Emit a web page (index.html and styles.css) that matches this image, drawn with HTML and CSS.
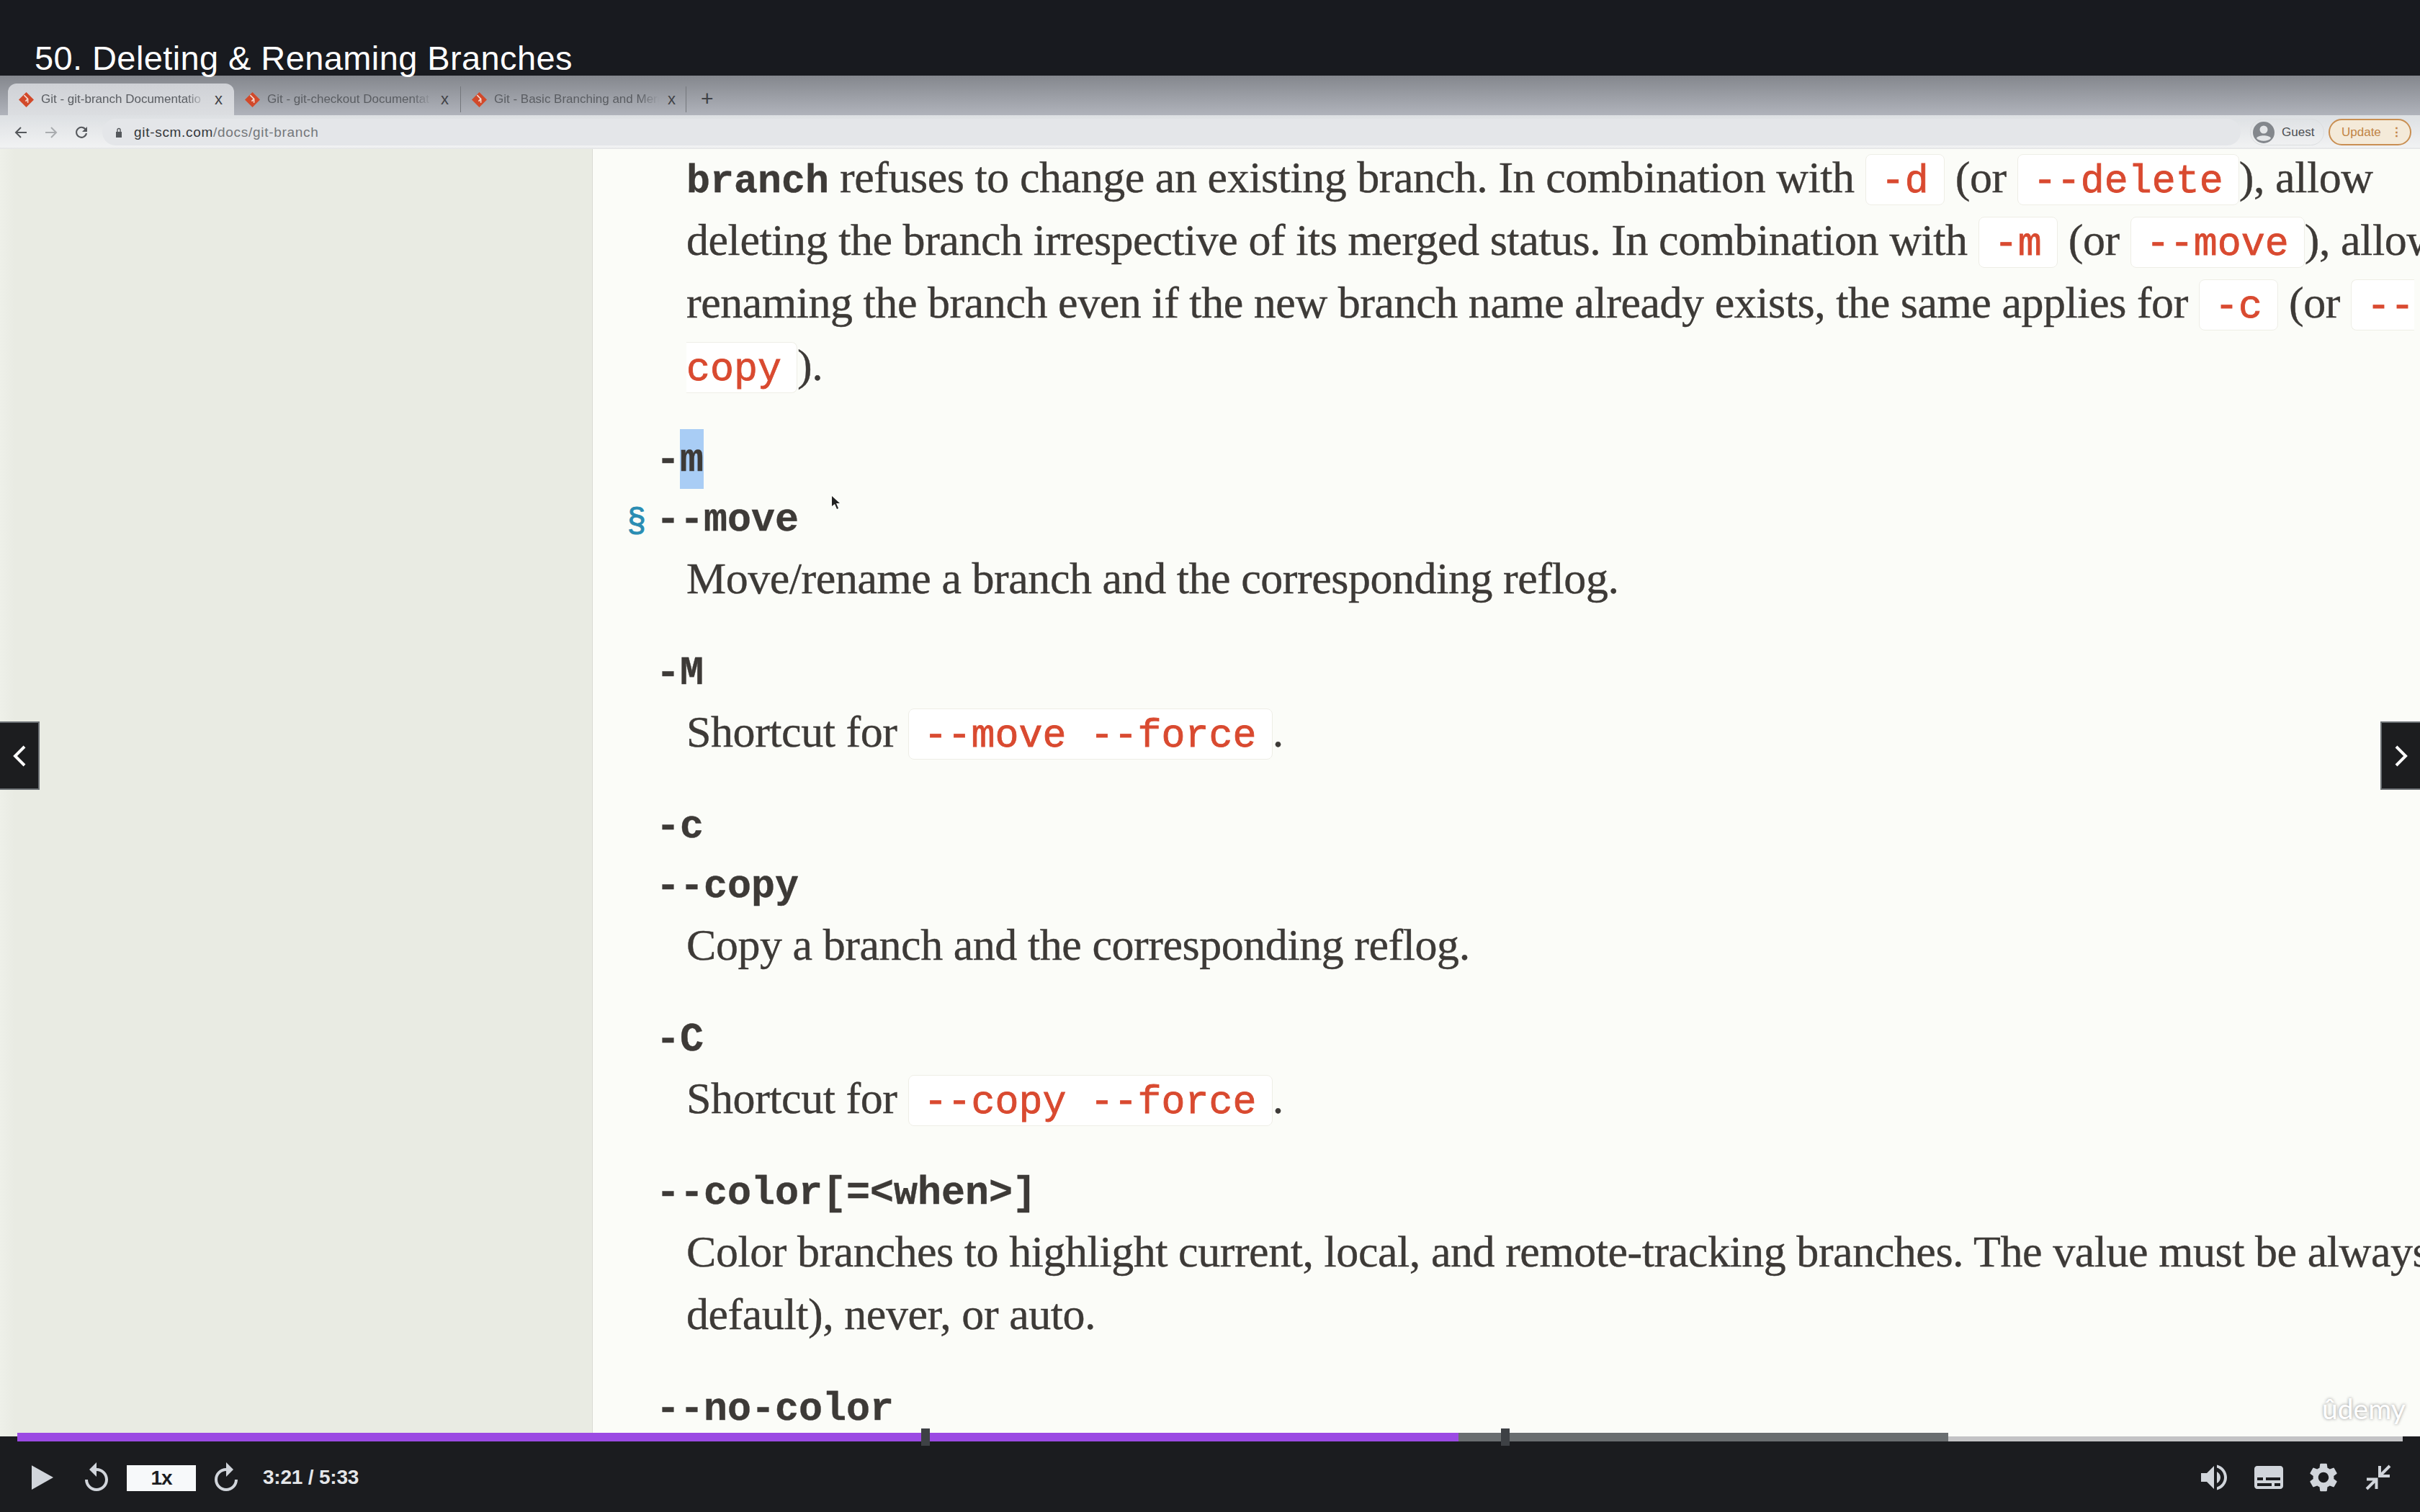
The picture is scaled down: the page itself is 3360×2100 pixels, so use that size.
FILE: index.html
```html
<!DOCTYPE html>
<html lang="en">
<head>
    <meta charset="UTF-8">
    <title>50. Deleting &amp; Renaming Branches</title>
    <link rel="stylesheet" href="styles.css">
</head>
<body>
    <header class="topbar">
        <h1 class="lecture-title">50. Deleting &amp; Renaming Branches</h1>
    </header>

    <main class="video">
        <div class="tabstrip">
            <div class="tab tab-active">
                <svg class="favicon" viewBox="0 0 20 20"><path fill="#d2492a" d="M10 0l10 10-10 10L0 10z"/><path fill="none" stroke="#f3d9d0" stroke-width="1.6" d="M7 4l5 5v5M12 9l-3 3"/></svg>
                <span class="tab-title">Git - git-branch Documentatio</span>
                <span class="tab-close">x</span>
            </div>
            <div class="tab">
                <svg class="favicon" viewBox="0 0 20 20"><path fill="#d2492a" d="M10 0l10 10-10 10L0 10z"/><path fill="none" stroke="#f3d9d0" stroke-width="1.6" d="M7 4l5 5v5M12 9l-3 3"/></svg>
                <span class="tab-title">Git - git-checkout Documentat</span>
                <span class="tab-close">x</span>
            </div>
            <div class="tab tab-divided">
                <svg class="favicon" viewBox="0 0 20 20"><path fill="#d2492a" d="M10 0l10 10-10 10L0 10z"/><path fill="none" stroke="#f3d9d0" stroke-width="1.6" d="M7 4l5 5v5M12 9l-3 3"/></svg>
                <span class="tab-title">Git - Basic Branching and Merg</span>
                <span class="tab-close">x</span>
            </div>
            <span class="tab-new">+</span>
        </div>

        <div class="toolbar">
            <svg class="nav-icon" viewBox="0 0 18 18"><path fill="none" stroke="#55585c" stroke-width="2" d="M17 9H2M9 2L2 9l7 7"/></svg>
            <svg class="nav-icon nav-off" viewBox="0 0 18 18"><path fill="none" stroke="#a9acaf" stroke-width="2" d="M1 9h15M9 2l7 7-7 7"/></svg>
            <svg class="nav-icon" viewBox="0 0 18 18"><path fill="none" stroke="#55585c" stroke-width="2" d="M15.5 6A7 7 0 1 0 16 10"/><path fill="#55585c" d="M17 1v7h-7z"/></svg>
            <div class="omnibox">
                <svg class="lock" viewBox="0 0 10 14"><path fill="#55585c" d="M1 6h8v8H1z"/><path fill="none" stroke="#55585c" stroke-width="1.4" d="M3 6V3.500a2 2 0 0 1 4 0V6"/></svg>
                <span class="url"><span class="url-host">git-scm.com</span>/docs/git-branch</span>
            </div>
            <div class="guest">
                <svg class="avatar" viewBox="0 0 30 30"><circle cx="15" cy="15" r="15" fill="#83878c"/><circle cx="15" cy="11" r="5.500" fill="#e4e6e8"/><path fill="#e4e6e8" d="M5 23c2-5 18-5 20 0-4 5-16 5-20 0z"/></svg>
                <span>Guest</span>
            </div>
            <div class="update">
                <span>Update</span>
                <span class="update-dots">⋮</span>
            </div>
        </div>

        <div class="page">
            <aside class="sidebar"></aside>
            <article class="doc">
                <p class="intro"><b class="cmd">branch</b> refuses to change an existing branch. In combination with <code>-d</code> (or <code>--delete</code>), allow<br>deleting the branch irrespective of its merged status. In combination with <code>-m</code> (or <code>--move</code>), allow<br>renaming the branch even if the new branch name already exists, the same applies for <code>-c</code> (or <code>--<br>copy</code>).</p>

                <dl class="options">
                    <div class="option">
                        <dt>-<span class="selected">m</span></dt>
                        <dt class="anchored"><span class="anchor">§</span>--move</dt>
                        <dd>Move/rename a branch and the corresponding reflog.</dd>
                    </div>
                    <div class="option">
                        <dt>-M</dt>
                        <dd>Shortcut for <code>--move --force</code>.</dd>
                    </div>
                    <div class="option">
                        <dt>-c</dt>
                        <dt>--copy</dt>
                        <dd>Copy a branch and the corresponding reflog.</dd>
                    </div>
                    <div class="option">
                        <dt>-C</dt>
                        <dd>Shortcut for <code>--copy --force</code>.</dd>
                    </div>
                    <div class="option">
                        <dt>--color[=&lt;when&gt;]</dt>
                        <dd>Color branches to highlight current, local, and remote-tracking branches. The value must be always (the<br>default), never, or auto.</dd>
                    </div>
                    <div class="option">
                        <dt>--no-color</dt>
                    </div>
                </dl>
            </article>
        </div>

        <svg class="cursor" viewBox="0 0 12 18"><path fill="#222" d="M0 0l11 10H6l3 7-2 1-3-7-4 3z"/></svg>
        <div class="watermark">ûdemy</div>

        <button class="side-arrow side-prev"><svg viewBox="0 0 20 32"><path fill="none" stroke="#fff" stroke-width="4" d="M17 3L4 16l13 13"/></svg></button>
        <button class="side-arrow side-next"><svg viewBox="0 0 20 32"><path fill="none" stroke="#fff" stroke-width="4" d="M3 3l13 13L3 29"/></svg></button>
    </main>

    <div class="progress">
        <div class="progress-played"></div>
        <div class="progress-buffered"></div>
        <div class="progress-rest"></div>
        <span class="bookmark bookmark-one"></span>
        <span class="bookmark bookmark-two"></span>
    </div>

    <footer class="controls">
        <svg class="ctl ctl-play" viewBox="0 0 32 36"><path d="M0 0l32 18L0 36z"/></svg>
        <svg class="ctl ctl-skip" viewBox="4 1 16 20"><path d="M12 5V1L7 6l5 5V7c3.310 0 6 2.690 6 6s-2.690 6-6 6-6-2.690-6-6H4c0 4.420 3.580 8 8 8s8-3.580 8-8-3.580-8-8-8z"/></svg>
        <span class="speed">1x</span>
        <svg class="ctl ctl-skip ctl-mirror" viewBox="4 1 16 20"><path d="M12 5V1L7 6l5 5V7c3.310 0 6 2.690 6 6s-2.690 6-6 6-6-2.690-6-6H4c0 4.420 3.580 8 8 8s8-3.580 8-8-3.580-8-8-8z"/></svg>
        <span class="time">3:21 / 5:33</span>
        <div class="controls-right">
            <svg class="ctl ctl-volume" viewBox="3 3 18 18"><path d="M3 9v6h4l5 5V4L7 9H3zm13.500 3c0-1.770-1.020-3.290-2.500-4.030v8.050c1.480-.730 2.500-2.250 2.500-4.020zM14 3.230v2.060c2.890.860 5 3.540 5 6.710s-2.110 5.850-5 6.710v2.060c4.010-.910 7-4.490 7-8.770s-2.990-7.860-7-8.770z"/></svg>
            <svg class="ctl ctl-captions" viewBox="2 4 20 16"><path d="M20 4H4c-1.100 0-2 .900-2 2v12c0 1.100.900 2 2 2h16c1.100 0 2-.900 2-2V6c0-1.100-.900-2-2-2zM4 12h4v2H4v-2zm10 6H4v-2h10v2zm6 0h-4v-2h4v2zm0-4H10v-2h10v2z"/></svg>
            <svg class="ctl ctl-gear" viewBox="2.500 2 19 20"><path d="M19.140 12.940c.040-.300.060-.610.060-.940 0-.320-.020-.640-.070-.940l2.030-1.580a.490.490 0 0 0 .120-.610l-1.920-3.320a.488.488 0 0 0-.590-.220l-2.390.960c-.500-.380-1.030-.700-1.620-.940l-.360-2.540a.484.484 0 0 0-.480-.410h-3.840c-.240 0-.430.170-.470.410l-.360 2.540c-.590.240-1.130.570-1.620.940l-2.390-.960c-.220-.080-.470 0-.590.220L2.740 8.870c-.120.210-.080.470.120.610l2.030 1.580c-.050.300-.090.630-.090.940s.020.640.070.940l-2.030 1.580a.490.490 0 0 0-.12.610l1.920 3.320c.120.220.370.290.590.220l2.390-.960c.500.380 1.030.700 1.620.940l.360 2.540c.050.240.240.410.480.410h3.840c.240 0 .440-.170.470-.410l.360-2.540c.590-.240 1.130-.560 1.620-.940l2.390.960c.220.080.470 0 .590-.220l1.920-3.320c.120-.220.070-.470-.120-.610l-2.010-1.580zM12 15.600c-1.980 0-3.600-1.620-3.600-3.600s1.620-3.600 3.600-3.600 3.600 1.620 3.600 3.600-1.620 3.600-3.600 3.600z"/></svg>
            <svg class="ctl ctl-collapse" viewBox="0 0 36 36"><path fill="none" stroke="#d1d5db" stroke-width="4" d="M20 2v14h14M20.500 15.500L34 2M2 20.500h13.500V34M15 21L2 34"/></svg>
        </div>
    </footer>
</body>
</html>
```

FILE: styles.css
```css
body {
    margin: 0;
    width: 3360px;
    height: 2100px;
    overflow: hidden;
    display: flex;
    flex-direction: column;
    position: relative;
    background-color: #181a1f;
    font-family: 'Liberation Sans', sans-serif;
}

/* lecture title above the video */
.topbar {
    height: 105px;
    flex: none;
    position: relative;
    z-index: 2;
    box-sizing: border-box;
    padding: 56px 0 0 48px;
}

.lecture-title {
    margin: 0;
    font-size: 47px;
    line-height: 49px;
    font-weight: 400;
    letter-spacing: 0.4px;
    color: #ffffff;
    white-space: nowrap;
}

.video {
    height: 1890px;
    flex: none;
    position: relative;
    overflow: hidden;
    display: flex;
    flex-direction: column;
    background-color: #fbfcf8;
}

/* browser chrome recorded in the video */
.tabstrip {
    height: 55px;
    flex: none;
    box-sizing: border-box;
    padding: 11px 0 0 11px;
    display: flex;
    align-items: stretch;
    background: linear-gradient(#84878d, #b0b3bb);
}

.tab {
    width: 314px;
    box-sizing: border-box;
    padding: 0 14px 0 15px;
    display: flex;
    align-items: center;
    font-size: 17px;
    color: #5a5d62;
}

.tab-active {
    border-radius: 12px 12px 0 0;
    background: linear-gradient(#cfd1d6, #dcdee1);
}

.tab-divided {
    border-left: 1px solid #74777c;
    border-right: 1px solid #74777c;
    height: 36px;
    margin-top: 4px;
}

.favicon {
    width: 21px;
    height: 21px;
    flex: none;
    margin-right: 10px;
}

.tab-title {
    width: 229px;
    flex: none;
    white-space: nowrap;
    -webkit-mask-image: linear-gradient(to right, #000 88%, transparent);
    mask-image: linear-gradient(to right, #000 88%, transparent);
}

.tab-close {
    margin-left: 12px;
    font-size: 22px;
    color: #3f4246;
}

.tab-new {
    margin-left: 20px;
    font-size: 30px;
    line-height: 42px;
    color: #3f4246;
}

.toolbar {
    height: 47px;
    flex: none;
    box-sizing: border-box;
    padding: 5px 11px 3px 20px;
    display: flex;
    align-items: center;
    background: linear-gradient(#dde0e3, #f1f2f3);
    border-bottom: 2px solid #e6e7e8;
}

.nav-icon {
    width: 18px;
    height: 18px;
    flex: none;
    margin-right: 24px;
}

.omnibox {
    width: 2969px;
    height: 37px;
    margin-left: -4px;
    flex: none;
    box-sizing: border-box;
    padding-left: 18px;
    display: flex;
    align-items: center;
    border-radius: 19px;
    background-color: #e4e6e9;
}

.lock {
    width: 10px;
    height: 14px;
    margin-right: 16px;
}

.url {
    font-size: 19px;
    letter-spacing: 0.7px;
    color: #74777b;
    white-space: nowrap;
}

.url-host {
    color: #35383c;
}

.guest {
    width: 103px;
    height: 37px;
    margin-left: 13px;
    flex: none;
    box-sizing: border-box;
    padding-left: 3px;
    display: flex;
    align-items: center;
    gap: 10px;
    border: 1px solid #dcdee0;
    border-radius: 19px;
    font-size: 17px;
    color: #4c4f53;
}

.avatar {
    width: 30px;
    height: 30px;
}

.update {
    width: 115px;
    height: 37px;
    margin-left: 6px;
    flex: none;
    box-sizing: border-box;
    padding: 0 10px 0 16px;
    display: flex;
    align-items: center;
    justify-content: space-between;
    border: 2px solid #c98f52;
    border-radius: 19px;
    background-color: #f4ead9;
    font-size: 17px;
    color: #c08445;
}

.update-dots {
    font-weight: 700;
}

/* git-scm page */
.page {
    flex: 1;
    min-height: 0;
    display: flex;
}

.sidebar {
    width: 822px;
    flex: none;
    background: linear-gradient(to right, #eef0e9, #e9ebe3 20px);
    border-right: 1px solid #d9dad4;
}

.doc {
    flex: 1;
    min-width: 0;
    padding-left: 88px;
    background-color: #fbfcf8;
    font-family: 'Liberation Serif', serif;
    font-size: 62px;
    letter-spacing: -0.45px;
    -webkit-text-stroke: 0.4px #3d3a37;
    color: #3d3a37;
    white-space: nowrap;
}

.intro {
    margin: -4px 0 0 42px;
    line-height: 87px;
}

.cmd,
dt,
code {
    font-family: 'Liberation Mono', monospace;
    font-size: 55px;
    letter-spacing: 0;
    line-height: 0;
}

.cmd,
dt {
    font-weight: 700;
}

code {
    padding: 6px 21px 0;
    background-color: #ffffff;
    border: 1px solid #eeeee6;
    border-radius: 8px;
    -webkit-text-stroke: 0.8px #d94a30;
    color: #d94a30;
}

.options {
    margin: 47px 0 0;
}

.option {
    margin-bottom: 47px;
}

dt {
    line-height: 83px;
}

dd {
    margin: -4px 0 0 42px;
    line-height: 87px;
}

.selected {
    padding: 12px 0 8px;
    background-color: #a9cdf5;
}

.anchored {
    position: relative;
}

.anchor {
    position: absolute;
    left: -40px;
    top: 0;
    font-family: 'Liberation Sans', sans-serif;
    font-size: 46px;
    font-weight: 400;
    -webkit-text-stroke: 1px #2a8db3;
    color: #2a8db3;
}

/* things lying over the video */
.cursor {
    position: absolute;
    left: 1155px;
    top: 584px;
    width: 12px;
    height: 18px;
}

.watermark {
    position: absolute;
    left: 3224px;
    top: 1826px;
    font-family: 'Lato', sans-serif;
    font-size: 39px;
    line-height: 50px;
    color: #ffffff;
    text-shadow: 0 0 4px #8d8d8d;
}

.side-arrow {
    position: absolute;
    top: 897px;
    width: 57px;
    height: 95px;
    padding: 0;
    display: flex;
    align-items: center;
    justify-content: center;
    background-color: #1c1d1f;
    border: 2px solid #6a6f73;
}

.side-arrow svg {
    width: 20px;
    height: 32px;
}

.side-prev {
    left: -2px;
}

.side-next {
    right: -2px;
}

/* seek bar */
.progress {
    position: absolute;
    left: 24px;
    top: 1990px;
    width: 3312px;
    height: 12px;
    display: flex;
    z-index: 3;
}

.progress-played {
    width: 2001px;
    background-color: #9b4ae3;
}

.progress-buffered {
    width: 680px;
    background-color: #6a6e70;
}

.progress-rest {
    flex: 1;
    background-color: #c3c3c5;
    border-top: 5px solid #fbfcf8;
}

.bookmark {
    position: absolute;
    top: -6px;
    width: 12px;
    height: 24px;
    background-color: #3e4145;
}

.bookmark-one {
    left: 1255px;
}

.bookmark-two {
    left: 2060px;
}

/* player controls */
.controls {
    height: 105px;
    flex: none;
    box-sizing: border-box;
    padding: 4px 40px 0 44px;
    display: flex;
    align-items: center;
    background-color: #1b1c1f;
}

.ctl {
    display: block;
    flex: none;
    fill: #d1d5db;
}

.ctl-play {
    width: 30px;
    height: 36px;
    margin-top: 5px;
}

.ctl-skip {
    width: 32px;
    height: 40px;
    margin: 3px 0 0 44px;
}

.ctl-mirror {
    transform: scaleX(-1);
    margin-left: 26px;
}

.speed {
    width: 96px;
    height: 36px;
    margin: 7px 0 0 26px;
    display: flex;
    align-items: center;
    justify-content: center;
    background-color: #f7f9fa;
    font-size: 28px;
    font-weight: 700;
    letter-spacing: -1px;
    color: #1c1d1f;
}

.time {
    margin: 5px 0 0 35px;
    font-size: 28px;
    font-weight: 700;
    letter-spacing: -0.2px;
    color: #e4e6e9;
    white-space: nowrap;
}

.controls-right {
    margin-left: auto;
    display: flex;
    align-items: center;
    margin-top: 5px;
}

.ctl-volume {
    width: 36px;
    height: 36px;
}

.ctl-captions {
    width: 40px;
    height: 32px;
    margin-left: 38px;
}

.ctl-gear {
    width: 38px;
    height: 40px;
    margin-left: 37px;
}

.ctl-collapse {
    width: 36px;
    height: 36px;
    margin-left: 39px;
}
```
